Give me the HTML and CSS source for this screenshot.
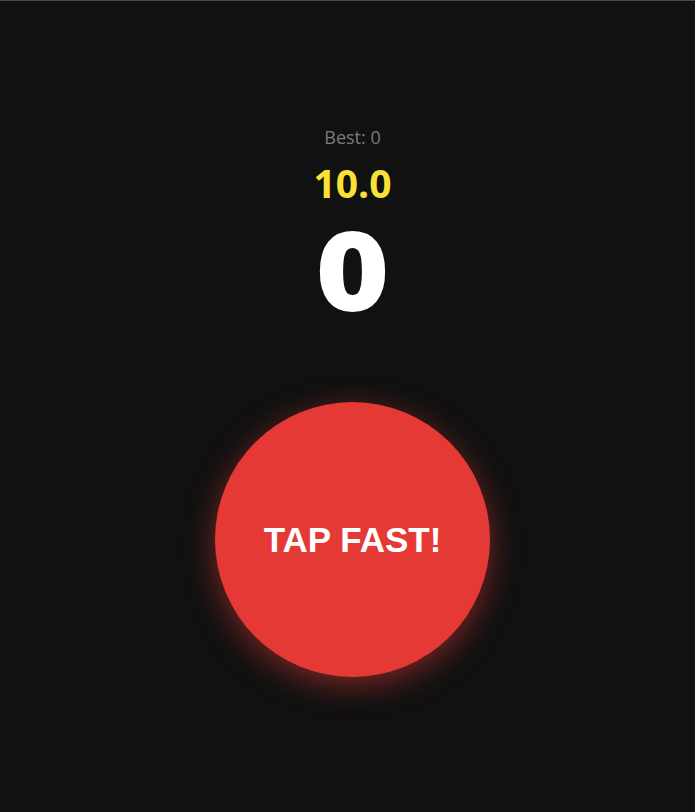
FILE: index.html
```html
<!DOCTYPE html>
<html lang="en">
<head>
    <meta charset="UTF-8">
    <meta name="viewport" content="width=device-width, initial-scale=1.0">
    <title>Tap Fast</title>
    <link rel="stylesheet" href="styles.css">
</head>
<body>
    <div class="game">
        <div class="best">Best: <span id="best">0</span></div>
        <div class="timer" id="timer">10.0</div>
        <div class="score" id="score">0</div>
        <button class="tap-button" id="tap">TAP FAST!</button>
    </div>
</body>
</html>
```

FILE: styles.css
```css
body {
    margin: 0;
    min-height: 811px;
    background: #111111;
    border-top: 1px solid #4a4a4a;
    font-family: "Open Sans", sans-serif;
    color: white;
}
.game {
    display: flex;
    flex-direction: column;
    align-items: center;
    padding: 124px 0 0 10px;
}
.best {
    font-size: 18px;
    color: #7a7a7a;
    line-height: 24px;
}
.timer {
    margin-top: 10px;
    font-size: 39px;
    font-weight: 700;
    color: #fbe135;
    line-height: 48px;
}
.score {
    margin-top: 7px;
    font-family: "DejaVu Sans", sans-serif;
    font-size: 102px;
    font-weight: 700;
    -webkit-text-stroke: 4px white;
    line-height: 120px;
}
.tap-button {
    margin-top: 68px;
    width: 275px;
    height: 275px;
    border-radius: 50%;
    border: none;
    background: #e53935;
    color: white;
    font-family: "Liberation Sans", Arial, sans-serif;
    font-size: 35px;
    font-weight: 700;
    box-shadow: 0 8px 30px rgba(229, 57, 53, 0.5);
    cursor: pointer;
}
```
